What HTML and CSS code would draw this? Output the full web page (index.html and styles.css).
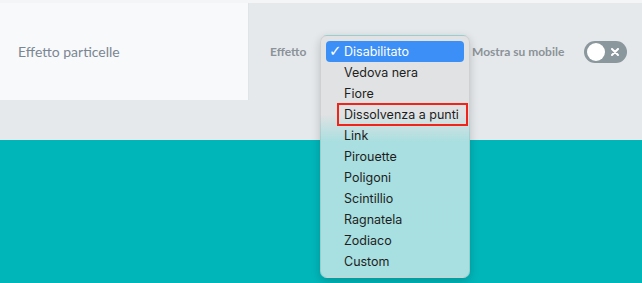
FILE: index.html
```html
<!DOCTYPE html>
<html lang="it">
<head>
    <meta charset="UTF-8">
    <title>Effetto particelle</title>
    <link rel="stylesheet" href="styles.css">
</head>
<body>
    <div class="topline"></div>

    <div class="row">
        <div class="card">Effetto particelle</div>

        <div class="fields">
            <span class="label label-effetto">Effetto</span>

            <!-- select aperto -->
            <div class="select-wrap">
                <ul class="menu">
                    <li class="item selected"><span class="check">&#10003;</span>Disabilitato</li>
                    <li class="item">Vedova nera</li>
                    <li class="item">Fiore</li>
                    <li class="item">Dissolvenza a punti</li>
                    <li class="item">Link</li>
                    <li class="item">Pirouette</li>
                    <li class="item">Poligoni</li>
                    <li class="item">Scintillio</li>
                    <li class="item">Ragnatela</li>
                    <li class="item">Zodiaco</li>
                    <li class="item">Custom</li>
                </ul>
                <div class="mark"></div>
            </div>

            <span class="label label-mobile">Mostra su mobile</span>

            <div class="toggle">
                <span class="knob"></span>
                <svg class="x" width="8" height="8" viewBox="0 0 8 8">
                    <path d="M1 1 L7 7 M7 1 L1 7" stroke="#fff" stroke-width="2" stroke-linecap="round"/>
                </svg>
            </div>
        </div>
    </div>

    <div class="gap"></div>
    <div class="teal"></div>
</body>
</html>
```

FILE: styles.css
```css
body {
    margin: 0;
    background-color: #e5e9ec;
    font-family: "Lato", "Liberation Sans", sans-serif;
    overflow: hidden;
}

.topline {
    height: 3px;
    background-color: #f3f5f7;
}

.row {
    display: flex;
    height: 97px;
}

.card {
    width: 249px;
    display: flex;
    align-items: center;
    padding-left: 18px;
    box-sizing: border-box;
    background-color: #f7f9fb;
    border-right: 1px solid #e0e4e8;
    color: #7b8692;
    font-size: 14px;
}

.fields {
    display: flex;
    align-items: center;
}

.label {
    color: #8b9298;
    font-size: 12px;
    font-weight: bold;
}

.label-effetto {
    margin-left: 21px;
    width: 50px;
}

.select-wrap {
    position: relative;
    width: 152px;
    height: 22px;
}

/* menu a tendina aperto sopra il contenuto */
.menu {
    position: absolute;
    top: -6px;
    left: 0;
    z-index: 2;
    width: 150px;
    margin: 0;
    padding: 5px 5px 5px;
    box-sizing: border-box;
    list-style: none;
    border-radius: 7px;
    border: 1px solid rgba(0, 0, 0, 0.08);
    background: linear-gradient(#e1e2e3 0, #e1e2e3 78px, #a9dfe0 106px, #a8dfe0 100%);
    box-shadow: 0 3px 10px rgba(0, 0, 0, 0.18);
    font-family: "Inter", "Roboto", sans-serif;
    font-size: 12.5px;
    color: #1e1e1e;
}

.item {
    height: 21px;
    line-height: 21px;
    padding-left: 18px;
    position: relative;
    border-radius: 4px;
}

.item.selected {
    background-color: #3b8ff6;
    color: #fff;
}

.check {
    position: absolute;
    left: 3px;
    top: 0;
    font-size: 15px;
    font-weight: bold;
    font-family: "DejaVu Sans", sans-serif;
}

.mark {
    position: absolute;
    top: 62px;
    left: 17px;
    z-index: 3;
    width: 131px;
    height: 23px;
    box-sizing: border-box;
    border: 2px solid #f0241b;
}

.label-mobile {
    width: 112px;
}

.toggle {
    position: relative;
    width: 43px;
    height: 22px;
    border-radius: 11px;
    background-color: #8a979d;
}

.knob {
    position: absolute;
    left: 3px;
    top: 2px;
    width: 18px;
    height: 18px;
    border-radius: 50%;
    background-color: #fff;
}

.x {
    position: absolute;
    left: 27px;
    top: 7px;
}

.gap {
    height: 40px;
}

.teal {
    height: 143px;
    background-color: #00b6b9;
}
```
